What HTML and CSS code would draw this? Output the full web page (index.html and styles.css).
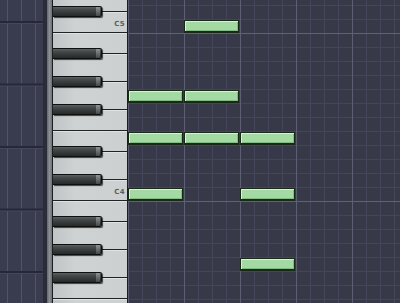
FILE: index.html
```html
<!DOCTYPE html>
<html lang="en">
<head>
    <meta charset="UTF-8">
    <meta name="viewport" content="width=device-width, initial-scale=1.0">
    <title>Piano Roll</title>
    <link rel="stylesheet" href="styles.css">
</head>
<body>
    <div class="side-panel"></div>
    <div class="side-edge"></div>
    <div class="rail"></div>

    <div class="piano">
        <div class="piano-keys">
            <div class="octave">
                <div class="white-key short"></div>
                <div class="white-key tall"></div>
                <div class="white-key tall"></div>
                <div class="white-key short"></div>
                <div class="white-key short"></div>
                <div class="white-key tall"></div>
                <div class="white-key short"><span class="key-label">C5</span></div>
                <div class="black-key as"></div>
                <div class="black-key gs"></div>
                <div class="black-key fs"></div>
                <div class="black-key ds"></div>
                <div class="black-key cs"></div>
            </div>
            <div class="octave">
                <div class="white-key short"></div>
                <div class="white-key tall"></div>
                <div class="white-key tall"></div>
                <div class="white-key short"></div>
                <div class="white-key short"></div>
                <div class="white-key tall"></div>
                <div class="white-key short"><span class="key-label">C4</span></div>
                <div class="black-key as"></div>
                <div class="black-key gs"></div>
                <div class="black-key fs"></div>
                <div class="black-key ds"></div>
                <div class="black-key cs"></div>
            </div>
            <div class="octave">
                <div class="white-key short"></div>
                <div class="white-key tall"></div>
                <div class="white-key tall"></div>
                <div class="white-key short"></div>
                <div class="white-key short"></div>
                <div class="white-key tall"></div>
                <div class="white-key short"></div>
                <div class="black-key as"></div>
                <div class="black-key gs"></div>
                <div class="black-key fs"></div>
                <div class="black-key ds"></div>
                <div class="black-key cs"></div>
            </div>
        </div>
    </div>

    <div class="roll">
        <div class="note" style="grid-row: 3; grid-column: 5 / 9;"></div>
        <div class="note" style="grid-row: 8; grid-column: 1 / 5;"></div>
        <div class="note" style="grid-row: 8; grid-column: 5 / 9;"></div>
        <div class="note" style="grid-row: 11; grid-column: 1 / 5;"></div>
        <div class="note" style="grid-row: 11; grid-column: 5 / 9;"></div>
        <div class="note" style="grid-row: 11; grid-column: 9 / 13;"></div>
        <div class="note" style="grid-row: 15; grid-column: 1 / 5;"></div>
        <div class="note" style="grid-row: 15; grid-column: 9 / 13;"></div>
        <div class="note" style="grid-row: 20; grid-column: 9 / 13;"></div>
    </div>
</body>
</html>
```

FILE: styles.css
```css
* {
    margin: 0;
    padding: 0;
    box-sizing: border-box;
}

body {
    font-family: "DejaVu Sans", "Liberation Sans", sans-serif;
    width: 400px;
    height: 303px;
    overflow: hidden;
    display: flex;
    background: #363848;
}

/* left panel (pattern area) */
.side-panel {
    flex: 0 0 43px;
    height: 100%;
    background-color: #393b4e;
    background-image:
        linear-gradient(to bottom, #26283a 2px, #44475b 2px, #44475b 3px, transparent 3px),
        linear-gradient(to right, #505369 1px, transparent 1px);
    background-size: 100% 62.5px, 14px 100%;
    background-position: 0 21px, 7px 0;
}

.side-edge {
    flex: 0 0 4px;
    background: #2a2c38;
}

.rail {
    flex: 0 0 5px;
    background: linear-gradient(to right, #62656b, #8d9095 50%, #6d7075);
}

/* keyboard */
.piano {
    flex: 0 0 76px;
    height: 100%;
    border-left: 1px solid #1c1d1f;
    border-right: 1px solid #1c1d1f;
    overflow: hidden;
    background: #c9cdcf;
}

.piano-keys {
    margin-top: -135px;
}

.octave {
    position: relative;
    display: flex;
    flex-direction: column;
}

.white-key {
    position: relative;
    background: linear-gradient(to right, #c0c4c6, #ced2d3 30%, #ccd0d1);
    border-bottom: 1px solid #202224;
    box-shadow: inset 0 1px 0 #e0e3e4;
}

.white-key.short {
    height: 21px;
}

.white-key.tall {
    height: 28px;
}

.key-label {
    position: absolute;
    right: 2px;
    bottom: 4px;
    font-size: 7px;
    font-weight: bold;
    line-height: 7px;
    letter-spacing: 0.4px;
    color: #5a5e62;
}

.black-key {
    position: absolute;
    left: 0;
    width: 49px;
    height: 11px;
    background: linear-gradient(to bottom, #5e6262 0, #474b4b 25%, #333636 70%, #282a2a 100%);
    border: 1px solid #0e0f0f;
    border-left: none;
    border-radius: 0 2px 2px 0;
    box-shadow: 1px 1px 1px rgba(0, 0, 0, 0.7);
}

.black-key::after {
    content: "";
    position: absolute;
    right: 1px;
    top: 0;
    width: 4px;
    height: 100%;
    background: linear-gradient(to bottom, #8f9393, #626666 60%, #454848);
    border-radius: 0 1px 1px 0;
}

.black-key.as { top: 15px; }
.black-key.gs { top: 43px; }
.black-key.fs { top: 71px; }
.black-key.ds { top: 113px; }
.black-key.cs { top: 141px; }

/* note grid */
.roll {
    flex: 1;
    min-width: 0;
    height: 100%;
    overflow: hidden;
    display: grid;
    grid-template-columns: repeat(20, 14px);
    grid-template-rows: 5px repeat(22, 14px);
    align-content: start;
    background-color: #373949;
    background-image:
        linear-gradient(to bottom, #5f6276 1px, transparent 1px),
        linear-gradient(to right, #5c5f73 1px, transparent 1px),
        linear-gradient(to bottom, #43465a 1px, transparent 1px),
        linear-gradient(to right, #44475b 1px, transparent 1px);
    background-size: 100% 168px, 56px 100%, 100% 14px, 14px 100%;
    background-position: 0 33px, 0 0, 0 5px, 0 0;
}

.note {
    margin: 1px 1px 0 0;
    background: #a3d9a3;
    border: 1px solid #1b291b;
    border-bottom-width: 2px;
    box-shadow: inset 1px 1px 0 #d8f3d4, inset -1px -1px 0 #84bb84;
}
```
